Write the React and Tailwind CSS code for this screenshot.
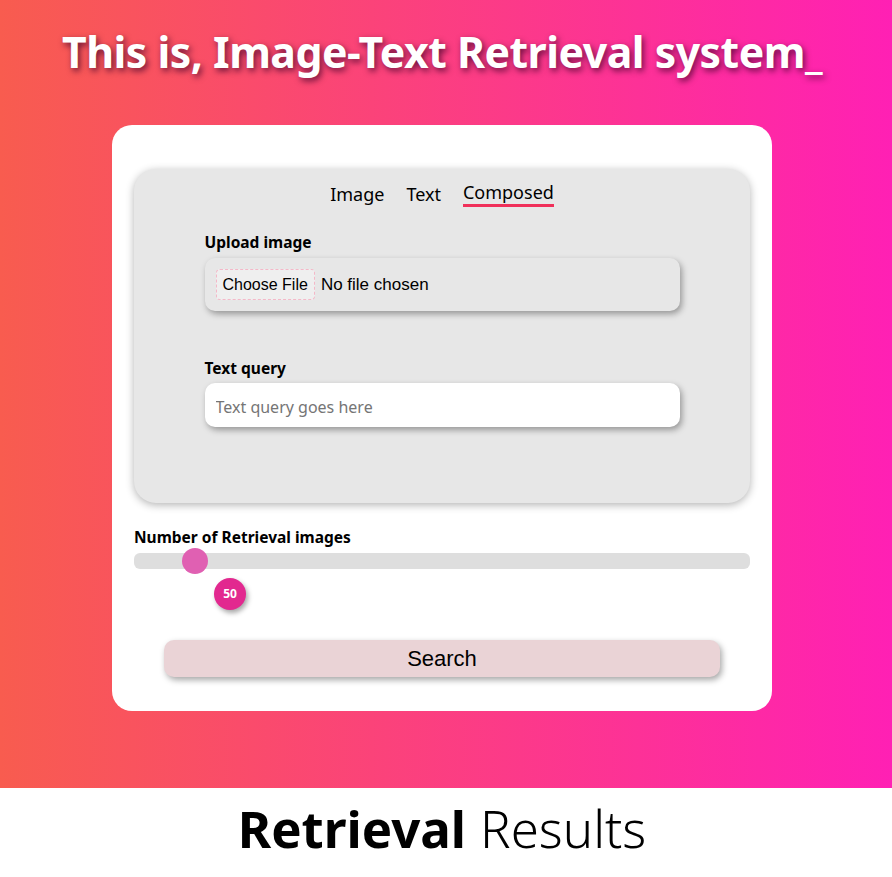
export default function App() {
  const font = { fontFamily: '"Noto Sans", "Open Sans", sans-serif' };
  return (
    <div className="w-full" style={font}>
      <div className="h-[788px] bg-[linear-gradient(to_right,#f85c4f,#ff20b4)] flex flex-col items-center pr-[8px]">
        <h1 className="mt-[25px] h-[55px] text-[42.8px] leading-[54px] font-bold text-white tracking-[-0.5px] [text-shadow:2px_3px_6px_rgba(60,0,40,0.75)]">
          This is, Image-Text Retrieval system_
        </h1>
        <div className="mt-[45px] w-[660px] h-[586px] bg-white rounded-[20px] px-[22px] pt-[44px] flex flex-col">
          <div className="h-[334px] bg-[#e7e7e7] rounded-[22px] shadow-[0_2px_8px_rgba(0,0,0,0.3)] flex flex-col items-center pt-[12px]">
            <div className="flex gap-[22px] text-[18px] text-black leading-[26px]">
              <span>Image</span>
              <span>Text</span>
              <span className="border-b-[3px] border-[#f0305a] leading-[23px]">Composed</span>
            </div>
            <div className="w-[475px] mt-[24px] flex flex-col">
              <label className="text-[15.5px] font-bold text-black leading-[22px]">Upload image</label>
              <div className="mt-[5px] h-[53px] rounded-[10px] bg-[#e7e7e7] shadow-[2px_3px_6px_rgba(0,0,0,0.35)] flex items-center px-[11px]">
                <span className="h-[31px] px-[6px] flex items-center border border-dashed border-[#f4b8c8] rounded-[4px] bg-[#efefef] text-[16px] text-black" style={{ fontFamily: '"Liberation Sans", Arial, sans-serif' }}>
                  Choose File
                </span>
                <span className="ml-[6px] text-[17px] text-black" style={{ fontFamily: '"Liberation Sans", Arial, sans-serif' }}>No file chosen</span>
              </div>
              <label className="mt-[46px] text-[15.5px] font-bold text-black leading-[22px]">Text query</label>
              <input
                className="mt-[4px] h-[44px] rounded-[10px] bg-white shadow-[2px_3px_6px_rgba(0,0,0,0.35)] px-[11px] pt-[3px] text-[16px] outline-none placeholder:text-[#757575]"
                placeholder="Text query goes here"
              />
            </div>
          </div>
          <div className="mt-[24px] text-[15.5px] font-bold text-black leading-[21px]">Number of Retrieval images</div>
          <div className="relative mt-[5px] h-[16px] rounded-[6px] bg-[#dedede]">
            <div className="absolute left-[48px] top-[-5px] w-[26px] h-[26px] rounded-full bg-[#e060b2]"></div>
            <div className="absolute left-[80px] top-[25px] w-[32px] h-[32px] rounded-full bg-[#e2288f] shadow-[2px_3px_5px_rgba(0,0,0,0.35)] flex items-center justify-center text-white text-[12px] font-bold">
              50
            </div>
          </div>
          <button className="mt-[71px] mx-[30px] h-[37px] rounded-[10px] bg-[#ead3d6] shadow-[2px_3px_6px_rgba(0,0,0,0.35)] text-[22px] text-black" style={{ fontFamily: '"Liberation Sans", Arial, sans-serif' }}>
            Search
          </button>
        </div>
      </div>
      <div className="h-[89px] bg-white flex items-center justify-center pr-[8px] pb-[10px] text-[51px] text-black leading-[60px]">
        <span className="font-bold">Retrieval</span>
        <span className="ml-[14px] font-light">Results</span>
      </div>
    </div>
  );
}
